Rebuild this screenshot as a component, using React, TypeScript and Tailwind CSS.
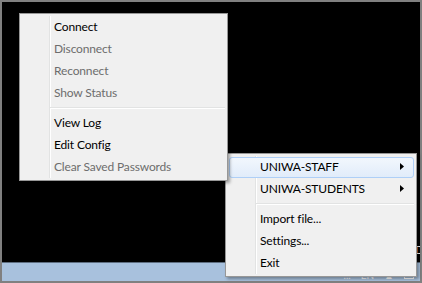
import React from "react";

type Item = { label: string; disabled?: boolean; sub?: boolean; hl?: boolean } | "sep";

function Menu({ items, className }: { items: Item[]; className: string }) {
  return (
    <div
      className={
        "absolute border border-[#979797] bg-[#f0f0f0] pt-[2px] pb-[1px] shadow-[2px_2px_3px_rgba(0,0,0,0.35)] " +
        className
      }
    >
      <div className="absolute top-[2px] bottom-[2px] left-[29px] w-[2px] border-l border-[#e2e3e3]">
        <div className="h-full w-px bg-white" />
      </div>
      {items.map((it, i) =>
        it === "sep" ? (
          <div key={i} className="relative flex h-[8px] items-center pl-[30px] pr-[2px]">
            <div className="w-full">
              <div className="h-px bg-[#e2e3e3]" />
              <div className="h-px bg-white" />
            </div>
          </div>
        ) : (
          <div key={i} className="relative flex h-[22px] items-center">
            {it.hl && (
              <div className="absolute left-[3px] right-[2px] top-px bottom-0 rounded-[3px] border border-[#aecff7] bg-gradient-to-b from-[#f2f7fd] to-[#e1ecfa]" />
            )}
            <span
              className={
                "relative pl-[34px] text-[12px] leading-none tracking-[-0.15px] " +
                (it.disabled ? "text-[#6d6d6d]" : "text-black")
              }
            >
              {it.label}
            </span>
            {it.sub && (
              <svg className="absolute right-[12px] top-[7px]" width="4" height="7" viewBox="0 0 4 7">
                <path d="M0 0 L4 3.5 L0 7 Z" fill="#000" />
              </svg>
            )}
          </div>
        )
      )}
    </div>
  );
}

export default function App() {
  const font = { fontFamily: 'Lato, "Open Sans", sans-serif' };
  return (
    <div className="relative h-[283px] w-[422px] overflow-hidden bg-[#808080]" style={font}>
      <div className="flex h-full flex-col pt-[2px] pb-[2px] pl-[2px] pr-[2px]">
        <div className="relative flex-1 overflow-hidden bg-black">
          <span className="absolute left-[413px] top-[242px] text-[12px] leading-none text-white">D</span>
        </div>
        <div className="h-[19px] border-t border-[#5e6e80] bg-[#a8c1dd]">
          <div className="flex h-full items-end justify-end gap-[10px] pr-[6px] pb-[1px] text-[10px] leading-none text-white">
            <span>...</span>
            <span>EN</span>
            <span>▲</span>
            <span className="mb-px inline-block h-[8px] w-[10px] border border-white" />
          </div>
        </div>
      </div>

      <Menu
        className="left-[225px] top-[153px] h-[124px] w-[192px]"
        items={[
          { label: "UNIWA-STAFF", sub: true, hl: true },
          { label: "UNIWA-STUDENTS", sub: true },
          "sep",
          { label: "Import file..." },
          { label: "Settings..." },
          { label: "Exit" },
        ]}
      />
      <Menu
        className="left-[19px] top-[13px] h-[168px] w-[209px]"
        items={[
          { label: "Connect" },
          { label: "Disconnect", disabled: true },
          { label: "Reconnect", disabled: true },
          { label: "Show Status", disabled: true },
          "sep",
          { label: "View Log" },
          { label: "Edit Config" },
          { label: "Clear Saved Passwords", disabled: true },
        ]}
      />
    </div>
  );
}
